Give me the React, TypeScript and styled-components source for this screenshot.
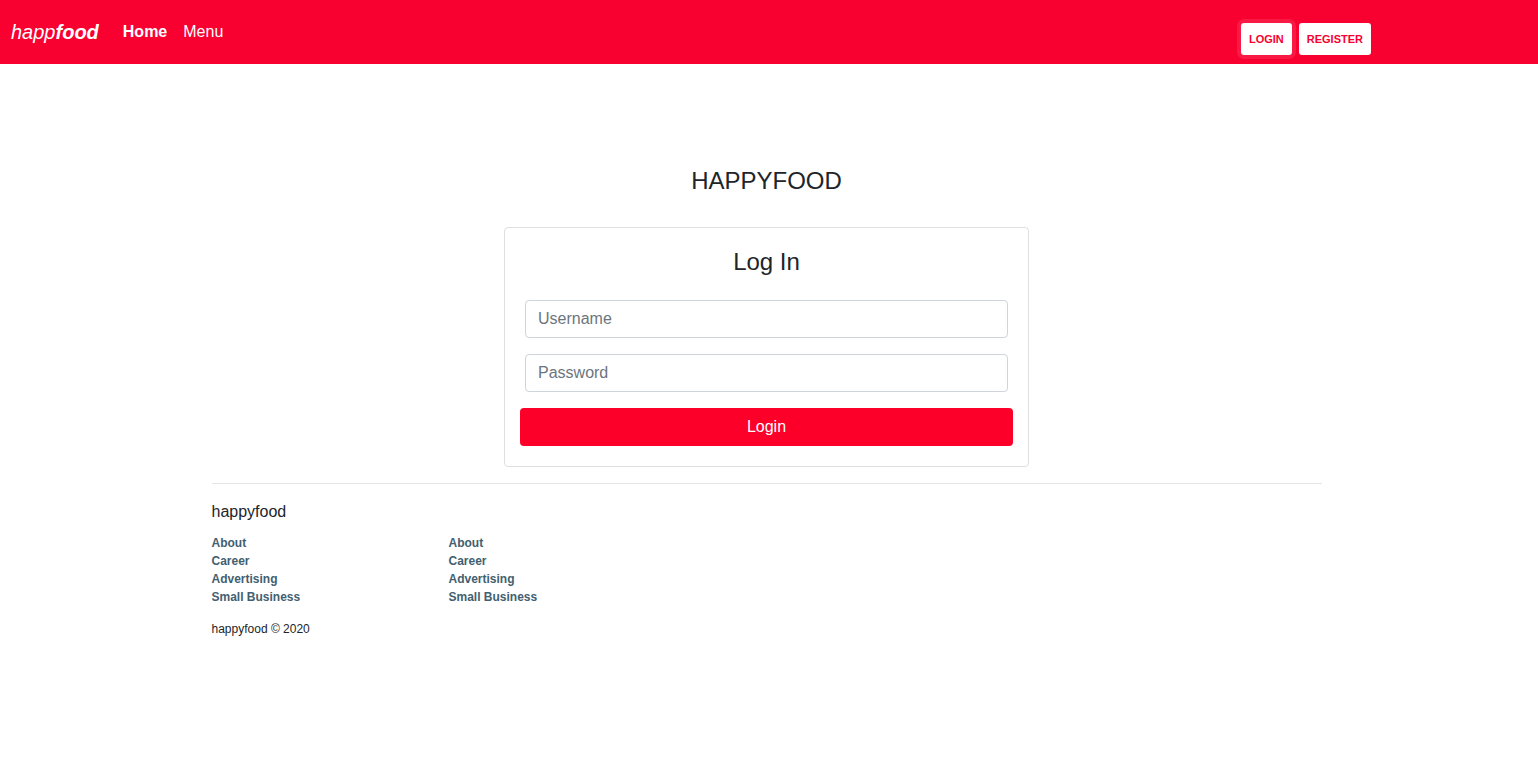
import React from "react";
import styled, { createGlobalStyle, css } from "styled-components";

const GlobalStyle = createGlobalStyle`
  *, *::before, *::after { box-sizing: border-box; }
  body {
    margin: 0;
    background: #fff;
    color: #212529;
    font-family: "Liberation Sans", Arial, sans-serif;
    font-size: 16px;
    line-height: 24px;
  }
`;

const Navbar = styled.nav`
  display: flex;
  align-items: center;
  height: 64px;
  padding: 0 167px 0 11px;
  background: #f80030;
`;

const Brand = styled.a`
  margin-right: 16px;
  color: #fff;
  font-size: 20px;
  font-style: italic;
  line-height: 30px;
  text-decoration: none;
`;

const NavLinks = styled.ul`
  display: flex;
  margin: 0;
  padding: 0;
  list-style: none;
`;

const NavLink = styled.a<{ $active?: boolean }>`
  display: block;
  padding: 8px;
  color: #fff;
  font-weight: ${(p) => (p.$active ? 700 : 400)};
  text-decoration: none;
`;

const NavActions = styled.div`
  display: flex;
  gap: 7px;
  margin-left: auto;
  padding-top: 14px;
`;

const NavButton = styled.button<{ $focused?: boolean }>`
  height: 32px;
  padding: 0 8px;
  border: 0;
  border-radius: 3px;
  background: #fff;
  color: #f80030;
  font-family: inherit;
  font-size: 11px;
  font-weight: 700;
  text-transform: uppercase;
  cursor: pointer;
  ${(p) =>
    p.$focused &&
    css`
      box-shadow: 0 0 0 4px rgba(255, 255, 255, 0.1);
    `}
`;

const Page = styled.div`
  padding: 101px 20px 32px 15px;
`;

const Container = styled.div`
  max-width: 1110px;
  margin: 0 auto;
`;

const Title = styled.h1`
  margin: 0;
  font-size: 24px;
  font-weight: 400;
  line-height: 32px;
  text-align: center;
`;

const Card = styled.section`
  max-width: 525px;
  margin: 30px auto 16px;
  padding: 20px;
  border: 1px solid #dfdfdf;
  border-radius: 4px;
`;

const CardTitle = styled.h2`
  margin: 0 0 24px;
  font-size: 24px;
  font-weight: 400;
  line-height: 28px;
  text-align: center;
`;

const Form = styled.form`
  display: flex;
  flex-direction: column;
  gap: 16px;
`;

const Field = styled.input`
  width: 100%;
  height: 38px;
  padding: 6px 12px;
  border: 1px solid #ced4da;
  border-radius: 4px;
  background: #fff;
  color: #495057;
  font-family: inherit;
  font-size: 16px;
  line-height: 24px;

  &::placeholder {
    color: #6c757d;
    opacity: 1;
  }
`;

const SubmitButton = styled.button`
  height: 38px;
  margin: 0 -5px;
  border: 0;
  border-radius: 4px;
  background: #fc002a;
  color: #fff;
  font-family: inherit;
  font-size: 16px;
  line-height: 24px;
  cursor: pointer;
`;

const Footer = styled.footer`
  padding-top: 16px;
  border-top: 1px solid #e5e5e5;
  font-size: 12px;
  line-height: 18px;
`;

const FooterTitle = styled.h3`
  margin: 0 0 10px;
  font-size: 16px;
  font-weight: 400;
  line-height: 24px;
`;

const FooterColumns = styled.div`
  display: grid;
  grid-template-columns: repeat(auto-fill, 222px);
  column-gap: 15px;
`;

const FooterList = styled.ul`
  margin: 0;
  padding: 0;
  list-style: none;
`;

const FooterLink = styled.a`
  color: #426070;
  font-weight: 700;
  text-decoration: none;
`;

const Copyright = styled.p`
  margin: 14px 0 0;
`;

const footerLinks = ["About", "Career", "Advertising", "Small Business"];

function FooterColumn() {
  return (
    <FooterList>
      {footerLinks.map((label) => (
        <li key={label}>
          <FooterLink href="#">{label}</FooterLink>
        </li>
      ))}
    </FooterList>
  );
}

export default function App() {
  return (
    <>
      <GlobalStyle />
      <Navbar>
        <Brand href="#">
          happ<b>food</b>
        </Brand>
        <NavLinks>
          <li>
            <NavLink href="#" $active>
              Home
            </NavLink>
          </li>
          <li>
            <NavLink href="#">Menu</NavLink>
          </li>
        </NavLinks>
        <NavActions>
          <NavButton type="button" $focused>
            Login
          </NavButton>
          <NavButton type="button">Register</NavButton>
        </NavActions>
      </Navbar>
      <Page>
        <Container>
          <main>
            <Title>HAPPYFOOD</Title>
            <Card>
              <CardTitle>Log In</CardTitle>
              <Form onSubmit={(e) => e.preventDefault()}>
                <Field type="text" placeholder="Username" aria-label="Username" />
                <Field type="password" placeholder="Password" aria-label="Password" />
                <SubmitButton type="submit">Login</SubmitButton>
              </Form>
            </Card>
          </main>
          <Footer>
            <FooterTitle>happyfood</FooterTitle>
            <FooterColumns>
              <FooterColumn />
              <FooterColumn />
            </FooterColumns>
            <Copyright>happyfood © 2020</Copyright>
          </Footer>
        </Container>
      </Page>
    </>
  );
}
